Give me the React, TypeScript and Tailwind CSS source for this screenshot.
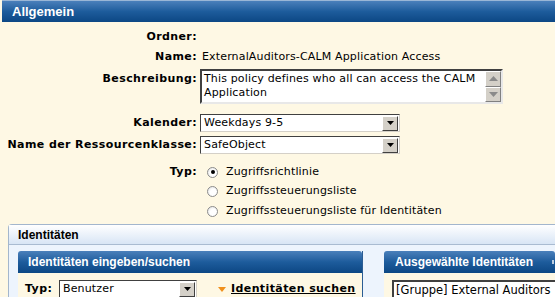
import React from "react";

const LABEL = "font-['DejaVu_Sans',Verdana,sans-serif] text-[11px] font-bold tracking-[0.4px] text-black";
const VALUE = "font-['DejaVu_Sans',Verdana,sans-serif] text-[11px] tracking-[0.15px] text-black";
const HEAD = "font-['Liberation_Sans',Arial,sans-serif] text-[12px] font-bold";

function DropButton() {
  return (
    <div className="flex h-[15px] w-[16px] items-center justify-center border border-t-white border-l-white border-r-[#404040] border-b-[#404040] bg-[#d4d0c8]">
      <svg width="7" height="4" viewBox="0 0 7 4">
        <path d="M0 0h7L3.5 4z" fill="#000" />
      </svg>
    </div>
  );
}

function Select({ value, width }: { value: string; width: string }) {
  return (
    <div
      className={`flex h-[18px] items-center justify-between border border-t-[#404040] border-l-[#404040] border-r-[#d4d0c8] border-b-[#d4d0c8] bg-white pl-[3px] pr-[1px] ${width}`}
    >
      <span className={`${VALUE} tracking-[0.4px]`}>{value}</span>
      <DropButton />
    </div>
  );
}

function ScrollArrow({ up }: { up?: boolean }) {
  return (
    <div className="flex h-[16px] w-[16px] items-center justify-center border border-t-white border-l-white border-r-[#808080] border-b-[#808080] bg-[#d4d0c8]">
      <svg width="9" height="5" viewBox="0 0 9 5">
        <path d={up ? "M0 5h9L4.5 0z" : "M0 0h9L4.5 5z"} fill="#8a8a8a" />
      </svg>
    </div>
  );
}

function Radio({ checked, label }: { checked?: boolean; label: string }) {
  return (
    <div className="flex items-center gap-[8px] pl-[7px]">
      <span className="flex h-[11px] w-[11px] items-center justify-center rounded-full border border-[#8c8c8c] bg-[radial-gradient(circle_at_60%_60%,#ffffff_40%,#dcdcdc)]">
        {checked && <span className="h-[4px] w-[4px] rounded-full bg-black" />}
      </span>
      <span className={VALUE}>{label}</span>
    </div>
  );
}

export default function App() {
  return (
    <div className="h-[297px] w-[555px] overflow-hidden bg-[#fef8e4]">
      {/* Allgemein header */}
      <div className="ml-[2px] flex h-[22px] items-center border-t border-[#9ab6d6] bg-gradient-to-b from-[#4a80bb] via-[#1d5c9c] to-[#0c4784] pl-[10px]">
        <span className={`${HEAD} text-[13px] text-white`}>Allgemein</span>
      </div>

      {/* Form */}
      <div className="grid grid-cols-[197px_1fr] gap-x-[3px] pt-[5px]">
        <div className={`${LABEL} flex h-[20px] items-center justify-end`}>Ordner:</div>
        <div className="h-[20px]" />

        <div className={`${LABEL} flex h-[20px] items-center justify-end`}>Name:</div>
        <div className={`${VALUE} flex h-[20px] items-center pl-[2px]`}>ExternalAuditors-CALM Application Access</div>

        <div className={`${LABEL} mt-[2px] pt-[2px] text-right`}>Beschreibung:</div>
        <div className="mt-[2px] flex h-[35px] w-[303px] border-2 border-t-[#404040] border-l-[#404040] border-r-[#e8e8e8] border-b-[#e8e8e8] bg-white">
          <div className={`${VALUE} flex-1 pl-[2px] pt-[1px] leading-[14px]`}>
            This policy defines who all can access the CALM Application
          </div>
          <div className="flex flex-col">
            <ScrollArrow up />
            <ScrollArrow />
          </div>
        </div>

        <div className={`${LABEL} mt-[10px] flex h-[18px] items-center justify-end`}>Kalender:</div>
        <div className="mt-[10px]">
          <Select value="Weekdays 9-5" width="w-[200px]" />
        </div>

        <div className={`${LABEL} mt-[4px] flex h-[18px] items-center justify-end`}>Name der Ressourcenklasse:</div>
        <div className="mt-[4px]">
          <Select value="SafeObject" width="w-[200px]" />
        </div>

        <div className={`${LABEL} mt-[8px] flex h-[20px] items-center justify-end`}>Typ:</div>
        <div className="mt-[8px] flex flex-col">
          <div className="flex h-[20px] items-center">
            <Radio checked label="Zugriffsrichtlinie" />
          </div>
          <div className="flex h-[19px] items-center">
            <Radio label="Zugriffssteuerungsliste" />
          </div>
          <div className="flex h-[20px] items-center">
            <Radio label="Zugriffssteuerungsliste für Identitäten" />
          </div>
        </div>
      </div>

      {/* Identitäten panel */}
      <div className="ml-[8px] mt-[3px] rounded-tl-[4px] border border-r-0 border-[#a3b6cd]">
        <div className="flex h-[20px] items-center border-b border-[#a9bbd1] bg-gradient-to-b from-white to-[#d8e5f5] pl-[9px]">
          <span className={`${HEAD} text-black`}>Identitäten</span>
        </div>
        <div className="flex gap-[21px] bg-[#edf4fd] pl-[9px] pt-[6px]">
          {/* left subpanel */}
          <div className="w-[345px] shrink-0 border-r border-[#2b5d94]">
            <div className="flex h-[22px] items-center rounded-t-[3px] bg-gradient-to-b from-[#4a80bb] via-[#1d5c9c] to-[#0c4784] pl-[10px]">
              <span className={`${HEAD} text-white`}>Identitäten eingeben/suchen</span>
            </div>
            <div className="flex h-[40px] items-start bg-[#fef8e4] pl-[7px] pt-[7px]">
              <span className={`${LABEL} flex h-[18px] w-[34px] items-center`}>Typ:</span>
              <Select value="Benutzer" width="w-[138px]" />
              <div className="ml-[21px] flex h-[18px] items-center gap-[5px]">
                <svg width="8" height="5" viewBox="0 0 8 5">
                  <path d="M0 0h8L4 5z" fill="#f0901c" />
                </svg>
                <span className={`${LABEL} text-[#2d5b8e] underline`}>Identitäten suchen</span>
              </div>
            </div>
          </div>

          {/* right subpanel */}
          <div className="min-w-0 flex-1">
            <div className="flex h-[22px] items-center justify-between rounded-t-[3px] bg-gradient-to-b from-[#4a80bb] via-[#1d5c9c] to-[#0c4784] pl-[11px]">
              <span className={`${HEAD} whitespace-nowrap text-white`}>Ausgewählte Identitäten</span>
              <span className="mr-[1px] h-[4px] w-[2px] bg-white/70" />
            </div>
            <div className="h-[40px] bg-[#fef8e4] pl-[8px] pt-[7px]">
              <div className="h-[40px] overflow-hidden border-2 border-r-0 border-t-[#404040] border-l-[#404040] bg-white pl-[2px] pt-[1px]">
                <div className="whitespace-nowrap font-['DejaVu_Sans',Verdana,sans-serif] text-[11.5px] leading-[14px] text-black">
                  [Gruppe] External Auditors
                </div>
              </div>
            </div>
          </div>
        </div>
      </div>
    </div>
  );
}
